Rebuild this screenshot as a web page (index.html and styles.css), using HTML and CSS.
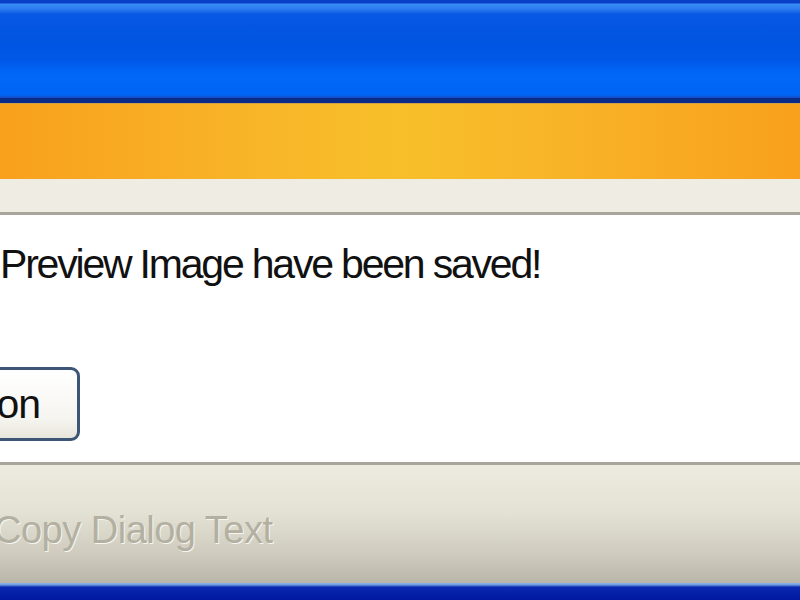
FILE: index.html
```html
<!DOCTYPE html>
<html>
<head>
  <title>Preview Image</title>
  <link rel="stylesheet" href="styles.css">
</head>
<body>
  <div class="window">
    <div class="titlebar"></div>
    <div class="banner"></div>
    <div class="strip"></div>

    <div class="content">
      <p class="message">Preview Image have been saved!</p>
      <div class="buttons">
        <button class="button">Open Location</button>
      </div>
    </div>

    <div class="footer">
      <span class="copy-text">Copy Dialog Text</span>
    </div>
    <div class="frame-bottom"></div>
  </div>
</body>
</html>
```

FILE: styles.css
```css
:root {
  --xp-blue: #0055e0;
  --xp-blue-light: #0068f8;
  --xp-dark: #0a2c86;
  --beige: #efede3;
  --divider: #a8a69c;
  --text-color: #111;
}

html, body {
  margin: 0;
  padding: 0;
  overflow: hidden;
}

body {
  width: 800px;
  height: 600px;
  font-family: "Liberation Sans", sans-serif;
  background: #fff;
}

.window {
  display: flex;
  flex-direction: column;
  height: 600px;
}

.titlebar {
  height: 98px;
  border-bottom: 5px solid var(--xp-dark);
  background: linear-gradient(to bottom,
    #0a40c8 0px, #0a40c8 3px,
    #3a8cf6 4px, #2c7cf0 9px,
    #0858e4 14px, var(--xp-blue) 40px,
    #0058e8 60px, var(--xp-blue-light) 75px,
    #0064f4 95px, #1a4cc0 98px);
}

.banner {
  height: 75px;
  background: linear-gradient(to right,
    #f9a01c 0%, #f8b428 30%, #f8bf2a 50%, #f8b428 70%, #f9a01c 100%);
  border-top: 1px solid #d0a048;
}

.strip {
  height: 33px;
  background: var(--beige);
}

.content {
  height: 247px;
  border-top: 3px solid var(--divider);
  background: #fff;
  display: flex;
  flex-direction: column;
}

.message {
  margin: 25px 0 0 0;
  font-size: 41px;
  line-height: 48px;
  letter-spacing: -2.2px;
  color: var(--text-color);
  white-space: nowrap;
}

.buttons {
  margin-top: 79px;
  display: flex;
}

.button {
  flex: none;
  margin-left: -320px;
  width: 400px;
  height: 74px;
  padding: 0 37px 0 0;
  text-align: right;
  border: 3px solid #3d5576;
  border-radius: 9px;
  background: linear-gradient(to bottom, #ffffff, #f6f5f0 70%, #e8e6dc);
  font-family: "Liberation Sans", sans-serif;
  font-size: 41px;
  letter-spacing: -1px;
  color: var(--text-color);
  white-space: nowrap;
  overflow: hidden;
}

.footer {
  height: 118px;
  border-top: 3px solid var(--divider);
  background: linear-gradient(to bottom, #ecebdf 0%, #e4e2d5 40%, #cfccbf 75%, #b9b5a8 100%);
  display: flex;
  align-items: flex-start;
}

.copy-text {
  margin: 45px 0 0 -6px;
  font-size: 38px;
  line-height: 40px;
  letter-spacing: -0.5px;
  color: #b3b0a2;
  text-shadow: 1px 1px 0 #f6f5ee;
  white-space: nowrap;
}

.frame-bottom {
  flex: 1;
  background: linear-gradient(to bottom, #8fb4ea 0px, #6a98e0 2px, #0a28b0 4px, #0018a0 100%);
}
```
